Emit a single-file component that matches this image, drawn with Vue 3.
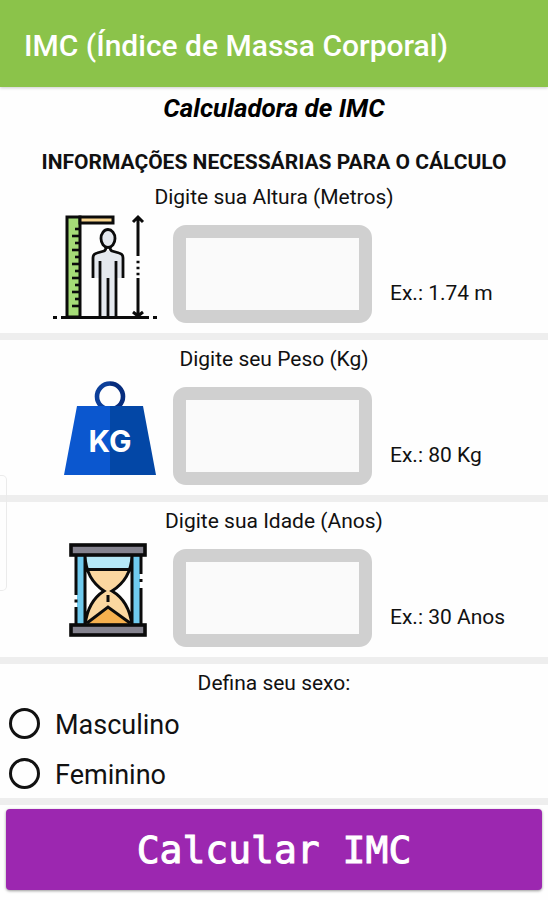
<script setup>
import { ref } from 'vue';

const altura = ref('');
const peso = ref('');
const idade = ref('');
const sexo = ref('');

// Marcas da régua
const marcas = Array.from({ length: 12 }, (_, i) => 18 + i * 7);
</script>

<template>
<div class="app">
    <header class="topbar">
        <h1>IMC (Índice de Massa Corporal)</h1>
    </header>
    <div class="edge-panel"></div>

    <form @submit.prevent>
        <h2 class="title">Calculadora de IMC</h2>
        <h3 class="subtitle">INFORMAÇÕES NECESSÁRIAS PARA O CÁLCULO</h3>

        <section class="field">
            <label for="altura">Digite sua Altura (Metros)</label>
            <div class="row">
                <svg class="icon" viewBox="0 0 112 112" fill="none" stroke="#0b0b0b" stroke-width="3">
                    <rect x="17" y="6" width="13" height="100" fill="#a5dc77" />
                    <rect x="30" y="6" width="33" height="6" fill="#f8d58f" />
                    <path v-for="(y, i) in marcas" :key="y" :d="`M${i % 2 ? 22 : 25} ${y}H30`" stroke-width="2.6" />
                    <path d="M50 106V67H43V47Q43 43 47 42L54 40Q58 39 62 40L69 42Q73 43 73 47V67H66V106Z" fill="#e4e8ee" stroke="none" />
                    <path d="M43 67V47Q43 43 47 42L54 40Q56 39 56 36M60 36Q60 39 62 40L69 42Q73 43 73 47V67M50 50V106M66 50V106M58 67V106" stroke-width="2.8" />
                    <ellipse cx="58" cy="27.5" rx="7" ry="9" fill="#e4e8ee" stroke-width="2.8" />
                    <path d="M88 7V45M88 67V104M83 11L88 6L93 11M83 101L88 105L93 101" />
                    <path d="M86.5 51h3M86.5 57h3M86.5 63h3" stroke-width="2.6" />
                    <path d="M11 106.5H99M3 106.5H7M103 106.5H107" />
                </svg>
                <input id="altura" v-model="altura" type="text" inputmode="decimal">
                <span class="example">Ex.: 1.74 m</span>
            </div>
        </section>

        <section class="field">
            <label for="peso">Digite seu Peso (Kg)</label>
            <div class="row">
                <svg class="icon" viewBox="0 0 112 112">
                    <path d="M60 10.5A13 13 0 0 0 60 36.5" fill="none" stroke="#0c3f9a" stroke-width="4.6" />
                    <path d="M60 10.5A13 13 0 0 1 60 36.5" fill="none" stroke="#062c7d" stroke-width="4.6" />
                    <path d="M27 33H60V102H14Z" fill="#0b57cf" />
                    <path d="M60 33H93L106 102H60Z" fill="#0347a6" />
                    <text class="kg" x="60" y="79" text-anchor="middle">KG</text>
                </svg>
                <input id="peso" v-model="peso" type="text" inputmode="decimal">
                <span class="example">Ex.: 80 Kg</span>
            </div>
        </section>

        <section class="field">
            <label for="idade">Digite sua Idade (Anos)</label>
            <div class="row">
                <svg class="icon" viewBox="0 0 112 112" fill="none" stroke="#0b0b0b" stroke-width="3">
                    <path d="M27 20H34V90H27ZM83 20H90V90H83Z" fill="#70cbef" stroke="none" />
                    <path d="M35 21H82Q82 28 79 34H38Q35 28 35 21Z" fill="#b5e8f7" stroke="none" />
                    <path d="M38 34H79Q74 47 62 56Q79 66 82 90H35Q38 66 54 56Q43 47 38 34Z" fill="#fbd7a0" stroke="none" />
                    <path d="M38 88L58 72L79 88V90H38Z" fill="#f6b04e" stroke="none" />
                    <path d="M35 21V90M82 21V90M38 34.5H79M35 21Q36 44 54 56Q38 66 35 90M82 21Q81 44 62 56Q79 66 82 90M37 88L58 72L80 88M58 60V67" />
                    <path d="M26 20V60M26 72V90M26 64.5V67.5M91 20V39M91 53V90M91 44V47" />
                    <rect x="21" y="10" width="74" height="10" fill="#85838f" stroke-width="3.6" />
                    <rect x="21" y="90" width="74" height="10" fill="#85838f" stroke-width="3.6" />
                </svg>
                <input id="idade" v-model="idade" type="text" inputmode="numeric">
                <span class="example">Ex.: 30 Anos</span>
            </div>
        </section>

        <fieldset class="gender">
            <legend>Defina seu sexo:</legend>
            <label class="option">
                <input v-model="sexo" type="radio" name="sexo" value="m">
                <span>Masculino</span>
            </label>
            <label class="option">
                <input v-model="sexo" type="radio" name="sexo" value="f">
                <span>Feminino</span>
            </label>
        </fieldset>

        <button class="calc" type="submit">Calcular IMC</button>
    </form>
</div>
</template>

<style>
body {
    margin: 0;
    background: #fefefe;
}
</style>

<style scoped>
.app {
    position: relative;
    font-family: Roboto, "Liberation Sans", sans-serif;
    color: #111;
}

h1, h2, h3 {
    margin: 0;
}

.topbar {
    padding: 30px 24px 25px;
    background: #8bc34a;
    box-shadow: 0 1px 3px rgba(0, 0, 0, 0.2);
}

.topbar h1 {
    color: #fff;
    font-size: 30px;
    font-weight: 500;
    line-height: 32px;
}

/* Alça do painel lateral */
.edge-panel {
    position: absolute;
    top: 475px;
    left: 0;
    width: 6px;
    height: 114px;
    border: 1px solid #ebebeb;
    border-left: 0;
    border-radius: 0 5px 5px 0;
}

.title {
    padding-top: 4px;
    font-size: 26px;
    font-style: italic;
    font-weight: 700;
    line-height: 34px;
    text-align: center;
    color: #000;
}

.subtitle {
    padding: 23px 0 2px;
    font-size: 21px;
    font-weight: 700;
    line-height: 28px;
    text-align: center;
}

.field {
    padding: 5px 0 10px;
    border-bottom: 7px solid #eee;
}

.field > label, legend {
    display: block;
    font-size: 21px;
    line-height: 28px;
    text-align: center;
}

.row {
    display: flex;
    align-items: flex-end;
    padding-left: 50px;
}

.icon {
    width: 112px;
    height: 112px;
    margin-right: 11px;
}

.kg {
    font-family: Inter, sans-serif;
    font-size: 30px;
    font-weight: 700;
    fill: #fff;
}

.row input {
    box-sizing: border-box;
    width: 199px;
    height: 98px;
    padding: 0 10px;
    border: 13px solid #d0d0d0;
    border-radius: 13px;
    background: #fafafa;
    font: inherit;
    font-size: 28px;
    text-align: center;
}

.example {
    padding: 0 0 16px 18px;
    font-size: 21px;
    line-height: 28px;
}

.gender {
    margin: 0;
    padding: 0;
    border: 0;
    border-bottom: 7px solid #eee;
}

.gender legend {
    width: 100%;
    padding: 5px 0 1px;
}

.option {
    display: flex;
    align-items: center;
    height: 50px;
    padding-left: 9px;
    font-size: 27px;
}

.option input {
    appearance: none;
    width: 31px;
    height: 31px;
    margin: 0 15px 0 0;
    border: 3px solid #111;
    border-radius: 50%;
}

.option span {
    padding-top: 4px;
}

.option input:checked {
    background: radial-gradient(#111 45%, transparent 50%);
}

.calc {
    display: block;
    width: calc(100% - 12px);
    height: 81px;
    margin: 4px 6px 10px;
    padding: 0;
    border: 0;
    border-radius: 4px;
    background: #9c27b0;
    box-shadow: 0 1px 3px rgba(0, 0, 0, 0.4);
    color: #fff;
    font-family: "DejaVu Sans Mono", "Liberation Mono", monospace;
    font-size: 38px;
    -webkit-text-stroke: 1px #fff;
    cursor: pointer;
}
</style>
